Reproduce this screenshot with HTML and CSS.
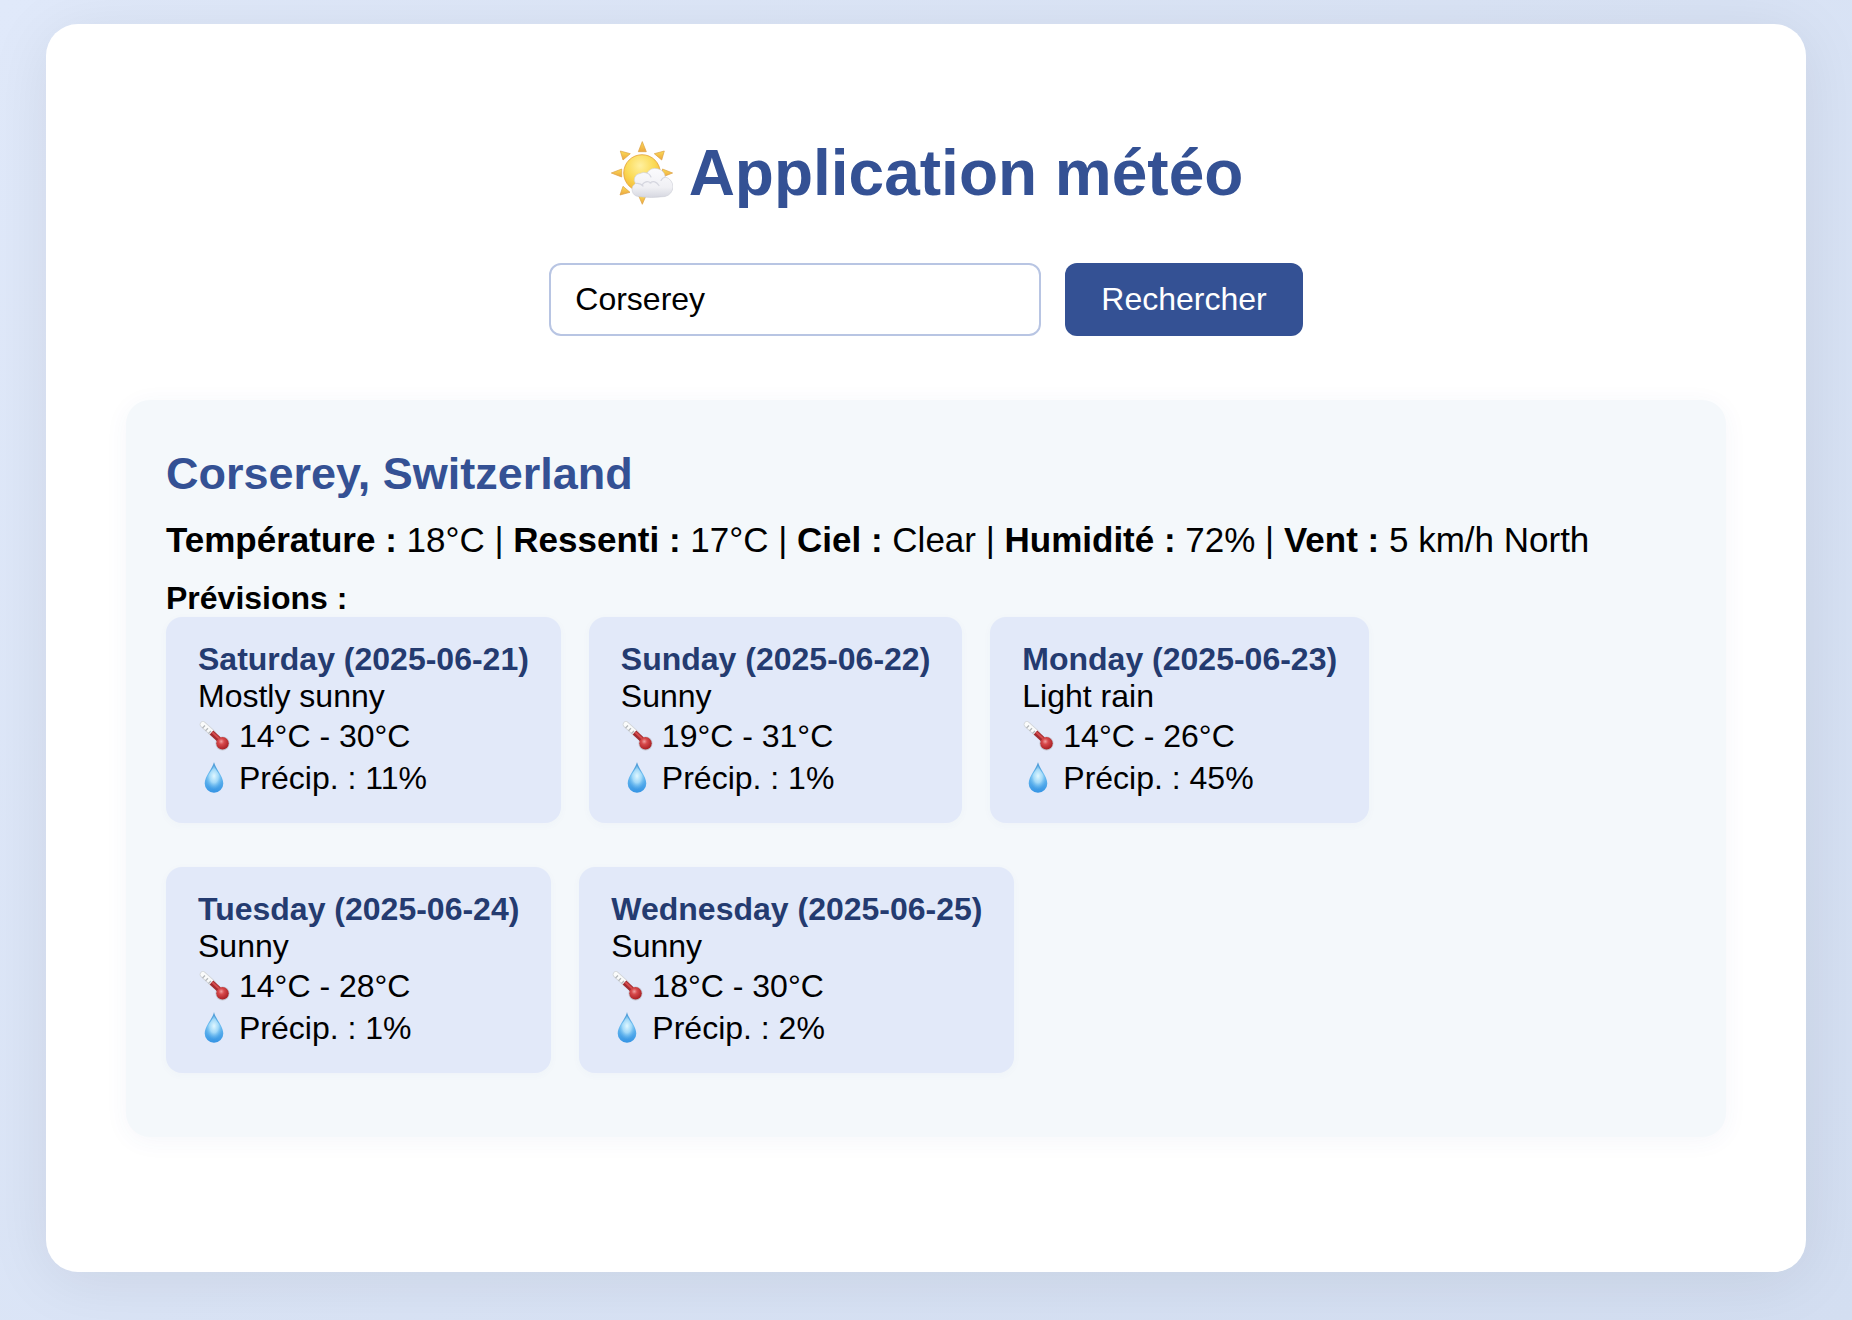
FILE: index.html
```html
<!DOCTYPE html>
<html lang="fr">
<head>
<meta charset="utf-8">
<meta name="viewport" content="width=device-width, initial-scale=1">
<title>Application météo</title>
<link rel="stylesheet" href="styles.css">
</head>
<body>
<svg class="sprite" aria-hidden="true">
  <defs>
    <radialGradient id="bulb" cx=".4" cy=".35" r=".65">
      <stop offset="0" stop-color="#f0a0a0"/><stop offset=".35" stop-color="#d84a4c"/><stop offset="1" stop-color="#a82024"/>
    </radialGradient>
    <linearGradient id="water" x1="0" y1="0" x2="0" y2="1">
      <stop offset="0" stop-color="#3f8fd0"/><stop offset=".4" stop-color="#6dbdf0"/><stop offset="1" stop-color="#3594e4"/>
    </linearGradient>
    <radialGradient id="shine" cx=".5" cy=".45" r=".55">
      <stop offset="0" stop-color="#e2f8ff"/><stop offset=".5" stop-color="#b4e4fc" stop-opacity=".8"/><stop offset="1" stop-color="#6dbdf0" stop-opacity="0"/>
    </radialGradient>
  </defs>
  <symbol id="thermometer" viewBox="0 0 32 32">
    <path d="M5 4.500 L15 13.500" stroke="#d3d6da" stroke-width="6.500" stroke-linecap="round"/>
    <path d="M5 4.500 L15 13.500" stroke="#fafbfb" stroke-width="5" stroke-linecap="round"/>
    <path d="M4.500 8 L7 5.500 M7.500 10.800 L10 8.300 M10.500 13.500 L13 11" stroke="#b4b8bc" stroke-width="1.300"/>
    <circle cx="24.500" cy="23.500" r="7" fill="#b9bcc4" opacity=".8"/>
    <path d="M13.500 12.500 L21 19.500" stroke="#a12b30" stroke-width="5.400"/>
    <path d="M14.300 12.300 L21 18.500" stroke="#d64b4d" stroke-width="2"/>
    <circle cx="24.500" cy="23.300" r="6.200" fill="url(#bulb)"/>
  </symbol>
  <symbol id="drop" viewBox="0 0 32 32">
    <path d="M16 0 C17 6 25.300 14 25.300 21.500 A9.300 9.300 0 0 1 6.700 21.500 C6.700 14 15 6 16 0Z" fill="url(#water)"/>
    <path d="M16 3 C17 8 24 14 24 19.500 A8 8 0 0 1 8 19.500 C8 14 15 8 16 3Z" fill="url(#shine)"/>
  </symbol>
</svg>

<main class="app">
  <h1 class="title">
    <svg class="title-icon" viewBox="0 0 64 64" aria-hidden="true">
      <defs>
        <radialGradient id="sun" cx=".45" cy=".3" r=".75">
          <stop offset="0" stop-color="#fff0a0"/><stop offset=".5" stop-color="#fbdb57"/><stop offset="1" stop-color="#f2b02e"/>
        </radialGradient>
        <linearGradient id="ray" x1="0" y1="0" x2="0" y2="1">
          <stop offset="0" stop-color="#fbdc55"/><stop offset="1" stop-color="#eda640"/>
        </linearGradient>
        <linearGradient id="cloud" x1="0" y1="0" x2="0" y2="1">
          <stop offset="0" stop-color="#fbfbfd"/><stop offset=".65" stop-color="#f0f0f4"/><stop offset="1" stop-color="#d6d7e0"/>
        </linearGradient>
      </defs>
      <g fill="url(#ray)" stroke="#dda043" stroke-width=".7" stroke-linejoin="round">
        <path d="M33.300 .6 L37.300 10.700 H29.300Z"/>
        <path d="M55.300 10 L52.700 19 L45.300 12.700Z"/>
        <path d="M63.600 32 L53.500 28 V36Z"/>
        <path d="M11.300 10 L21.300 12.700 L14 19Z"/>
        <path d="M2.300 32 L12.700 28 V36Z"/>
        <path d="M11 54 L14 45.300 L21 51.300Z"/>
        <path d="M33.300 63.300 L37.300 54 H29.300Z"/>
      </g>
      <circle cx="33" cy="32" r="18.300" fill="url(#sun)" stroke="#e3a13a" stroke-width=".8"/>
      <g fill="url(#cloud)" stroke="#cbccd5" stroke-width=".6">
        <path d="M29.500 55.500 A7 7 0 0 1 26.500 42.500 A6.300 6.300 0 0 1 31 32.500 A8 8 0 0 1 38 32 A10 10 0 0 1 56.300 36 A10 10 0 0 1 56 55.500 Q42 57.500 29.500 55.500Z"/>
      </g>
      <path d="M27 42.500 Q31 41.500 34 45 M33 44 Q37 38.500 42 42 M41 42 Q46 38.500 50 44.500 M38 32 Q41 33 42 36 M56.300 36 Q53 37 52 39.500" fill="none" stroke="#d5d6df" stroke-width="1.200" stroke-linecap="round"/>
    </svg>
    <span>Application météo</span>
  </h1>

  <form class="search">
    <input class="search-input" type="text" aria-label="Ville" value="Corserey">
    <button class="search-button" type="button">Rechercher</button>
  </form>

  <section class="weather">
    <h2 class="place">Corserey, Switzerland</h2>
    <p class="current"><strong>Température :</strong> 18°C | <strong>Ressenti :</strong> 17°C | <strong>Ciel :</strong> Clear | <strong>Humidité :</strong> 72% | <strong>Vent :</strong> 5 km/h North</p>
    <h3 class="forecast-title">Prévisions :</h3>
    <ul class="forecast">
      <li class="day">
        <strong class="day-name">Saturday (2025-06-21)</strong>
        <span>Mostly sunny</span>
        <span class="reading"><svg class="icon" aria-hidden="true"><use href="#thermometer"/></svg>14°C - 30°C</span>
        <span class="reading"><svg class="icon" aria-hidden="true"><use href="#drop"/></svg>Précip. : 11%</span>
      </li>
      <li class="day">
        <strong class="day-name">Sunday (2025-06-22)</strong>
        <span>Sunny</span>
        <span class="reading"><svg class="icon" aria-hidden="true"><use href="#thermometer"/></svg>19°C - 31°C</span>
        <span class="reading"><svg class="icon" aria-hidden="true"><use href="#drop"/></svg>Précip. : 1%</span>
      </li>
      <li class="day">
        <strong class="day-name">Monday (2025-06-23)</strong>
        <span>Light rain</span>
        <span class="reading"><svg class="icon" aria-hidden="true"><use href="#thermometer"/></svg>14°C - 26°C</span>
        <span class="reading"><svg class="icon" aria-hidden="true"><use href="#drop"/></svg>Précip. : 45%</span>
      </li>
      <li class="day">
        <strong class="day-name">Tuesday (2025-06-24)</strong>
        <span>Sunny</span>
        <span class="reading"><svg class="icon" aria-hidden="true"><use href="#thermometer"/></svg>14°C - 28°C</span>
        <span class="reading"><svg class="icon" aria-hidden="true"><use href="#drop"/></svg>Précip. : 1%</span>
      </li>
      <li class="day">
        <strong class="day-name">Wednesday (2025-06-25)</strong>
        <span>Sunny</span>
        <span class="reading"><svg class="icon" aria-hidden="true"><use href="#thermometer"/></svg>18°C - 30°C</span>
        <span class="reading"><svg class="icon" aria-hidden="true"><use href="#drop"/></svg>Précip. : 2%</span>
      </li>
    </ul>
  </section>
</main>
</body>
</html>
```

FILE: styles.css
```css
* {
  box-sizing: border-box;
}

body {
  margin: 0;
  min-height: 100vh;
  padding: 24px;
  background: linear-gradient(135deg, #e0e9fa, #d3def1);
  color: #000;
  font-family: "Liberation Sans", Arial, sans-serif;
  font-size: 32px;
  line-height: 37px;
}

.sprite {
  display: block;
  width: 0;
  height: 0;
}

.app {
  max-width: 1760px;
  margin: 0 auto;
  padding: 112px 80px 135px;
  border-radius: 32px;
  background: #fff;
  box-shadow: 0 8px 64px rgba(0, 0, 0, 0.08);
}

.title {
  display: flex;
  justify-content: center;
  align-items: center;
  gap: 16px;
  margin: 0 0 53px;
  color: #345194;
  font-size: 64px;
  line-height: 74px;
}

.title-icon {
  width: 64px;
  height: 64px;
}

.search {
  display: flex;
  justify-content: center;
  gap: 24px;
  margin-bottom: 64px;
}

.search-input,
.search-button {
  border-radius: 12px;
  font: inherit;
}

.search-input {
  width: 492px;
  min-width: 0;
  padding: 16px 24px;
  border: 2px solid #b8c5e3;
  background: #fff;
  color: #000;
}

.search-button {
  padding: 18px 36px;
  border: 0;
  background: #345194;
  color: #fff;
}

.weather {
  padding: 48px 40px 64px;
  border-radius: 24px;
  background: #f4f8fb;
  box-shadow: 0 4px 24px rgba(52, 81, 148, 0.05);
}

.place {
  margin: 0 0 20px;
  color: #345194;
  font-size: 45px;
  line-height: 52px;
}

.current {
  margin: 0 0 20px;
  font-size: 35px;
  line-height: 40px;
}

.forecast-title {
  margin: 0;
  font-size: 32px;
}

.forecast {
  display: flex;
  flex-wrap: wrap;
  gap: 44px 28px;
  margin: 0;
  padding: 0;
  list-style: none;
}

.day {
  display: flex;
  flex-direction: column;
  padding: 24px 32px;
  border-radius: 16px;
  background: #e2e9f9;
  box-shadow: 0 2px 8px rgba(52, 81, 148, 0.03);
}

.day-name {
  color: #243b70;
}

.reading {
  display: flex;
  align-items: center;
  gap: 9px;
  line-height: 42px;
}

.icon {
  width: 32px;
  height: 32px;
}
```
